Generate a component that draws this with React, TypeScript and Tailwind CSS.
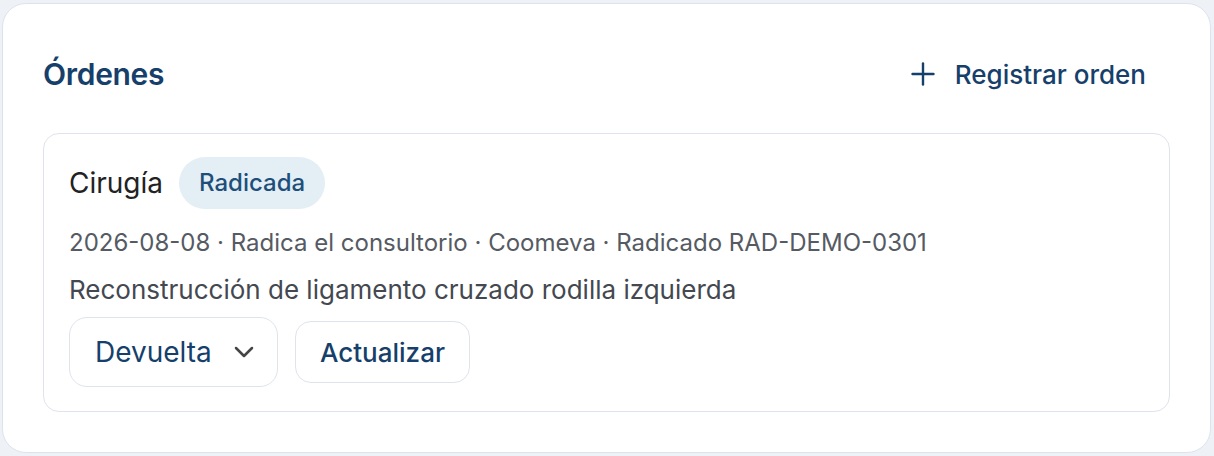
import React from "react";
import { Plus, ChevronDown } from "lucide-react";

const META = ["2026-08-08", "Radica el consultorio", "Coomeva", "Radicado RAD-DEMO-0301"];

export default function App() {
  return (
    <div
      className="h-[456px] w-[1214px] bg-[#eef1f6] pl-[2px] pt-[3px]"
      style={{ fontFamily: "Inter, 'Noto Sans', sans-serif" }}
    >
      <div className="h-[450px] w-[1209px] rounded-[24px] border border-[#dde3ee] bg-white px-[40px] pt-[42px]">
        <div className="flex items-center justify-between">
          <h2 className="text-[30px] font-semibold leading-[56px] tracking-[-0.3px] text-[#163f6b]">Órdenes</h2>
          <button className="flex h-[56px] items-center gap-[14px] rounded-xl pl-[24px] pr-[24px] text-[26px] font-medium text-[#163f6b]">
            <Plus size={36} strokeWidth={1.6} />
            Registrar orden
          </button>
        </div>

        <div className="mt-[31px] rounded-[16px] border border-[#dfe3ec] pb-[24px] pl-[25px] pr-[26px] pt-[23px]">
          <div className="flex items-center gap-[16px]">
            <span className="text-[28px] text-[#222222]">Cirugía</span>
            <span className="flex h-[52px] items-center rounded-full bg-[#e3eff5] px-[20px] text-[24px] font-medium text-[#1e4f7b]">
              Radicada
            </span>
          </div>
          <div className="mt-[18px] text-[24px] leading-[32px] text-[#555a63]">{META.join(" · ")}</div>
          <div className="mt-[14px] text-[26px] leading-[34px] text-[#444850]">
            Reconstrucción de ligamento cruzado rodilla izquierda
          </div>
          <div className="mt-[10px] flex items-center gap-[17px]">
            <button className="flex h-[70px] w-[209px] items-center justify-between rounded-[18px] border border-[#dfe3ec] pl-[25px] pr-[17px] text-[28px] text-[#163f6b]">
              Devuelta
              <ChevronDown size={32} strokeWidth={1.9} className="text-[#454545]" />
            </button>
            <button className="flex h-[62px] w-[175px] items-center justify-center rounded-[16px] border border-[#dfe3ec] text-[26px] font-medium text-[#163f6b]">
              Actualizar
            </button>
          </div>
        </div>
      </div>
    </div>
  );
}
